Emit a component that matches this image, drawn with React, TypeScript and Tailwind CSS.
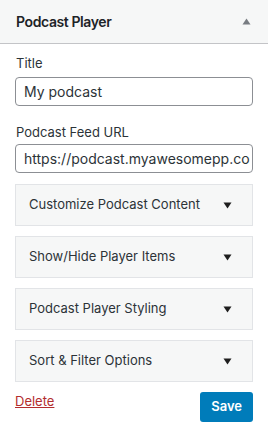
import React from "react";

const font = { fontFamily: 'Inter, "Noto Sans", sans-serif' };

function Section({ label }: { label: string }) {
  return (
    <div className="h-[42px] flex items-center justify-between bg-[#f6f7f7] border border-[#e2e4e7] pl-[13px] pr-[20px]">
      <span className="text-[13px] text-[#2c3338]">{label}</span>
      <svg width="9" height="7" viewBox="0 0 9 7">
        <path d="M0.5 0.5 H8.5 L4.5 6.5 Z" fill="#1e1e1e" />
      </svg>
    </div>
  );
}

export default function App() {
  return (
    <div className="w-[268px] h-[436px] bg-white" style={font}>
      <div className="h-[44px] bg-[#f6f7f7] border-b border-[#c3c4c7] flex items-center justify-between pl-[16px] pr-[17px]">
        <span className="text-[14px] font-semibold tracking-[-0.4px] text-[#1d2327]">Podcast Player</span>
        <svg width="9" height="7" viewBox="0 0 9 7">
          <path d="M0.5 6.5 H8.5 L4.5 0.5 Z" fill="#787c82" />
        </svg>
      </div>
      <div className="pl-[15px] pr-[15px] pt-[10px]">
        <div className="text-[13px] text-[#2c3338] leading-[18px] pl-[1px]">Title</div>
        <input
          readOnly
          value="My podcast"
          className="mt-[5px] block w-full h-[29px] border border-[#8c8f94] rounded-[4px] pl-[8px] pr-[2px] text-[14px] text-[#2c3338] outline-none"
          style={font}
        />
        <div className="mt-[17px] text-[13px] text-[#2c3338] leading-[18px] pl-[1px]">Podcast Feed URL</div>
        <input
          readOnly
          value="https://podcast.myawesomepp.com/feed"
          className="mt-[3px] block w-full h-[29px] border border-[#8c8f94] rounded-[4px] pl-[8px] pr-[2px] text-[14px] text-[#2c3338] outline-none"
          style={font}
        />
        <div className="mt-[11px] flex flex-col gap-[10px]">
          <Section label="Customize Podcast Content" />
          <Section label="Show/Hide Player Items" />
          <Section label="Podcast Player Styling" />
          <Section label="Sort & Filter Options" />
        </div>
        <div className="mt-[10px] flex items-start justify-between">
          <a className="text-[13px] text-[#b32d2e] underline leading-[18px]" href="#">Delete</a>
          <button className="h-[30px] px-[11px] rounded-[3px] bg-[#007cba] text-white text-[13px] font-semibold">Save</button>
        </div>
      </div>
    </div>
  );
}
